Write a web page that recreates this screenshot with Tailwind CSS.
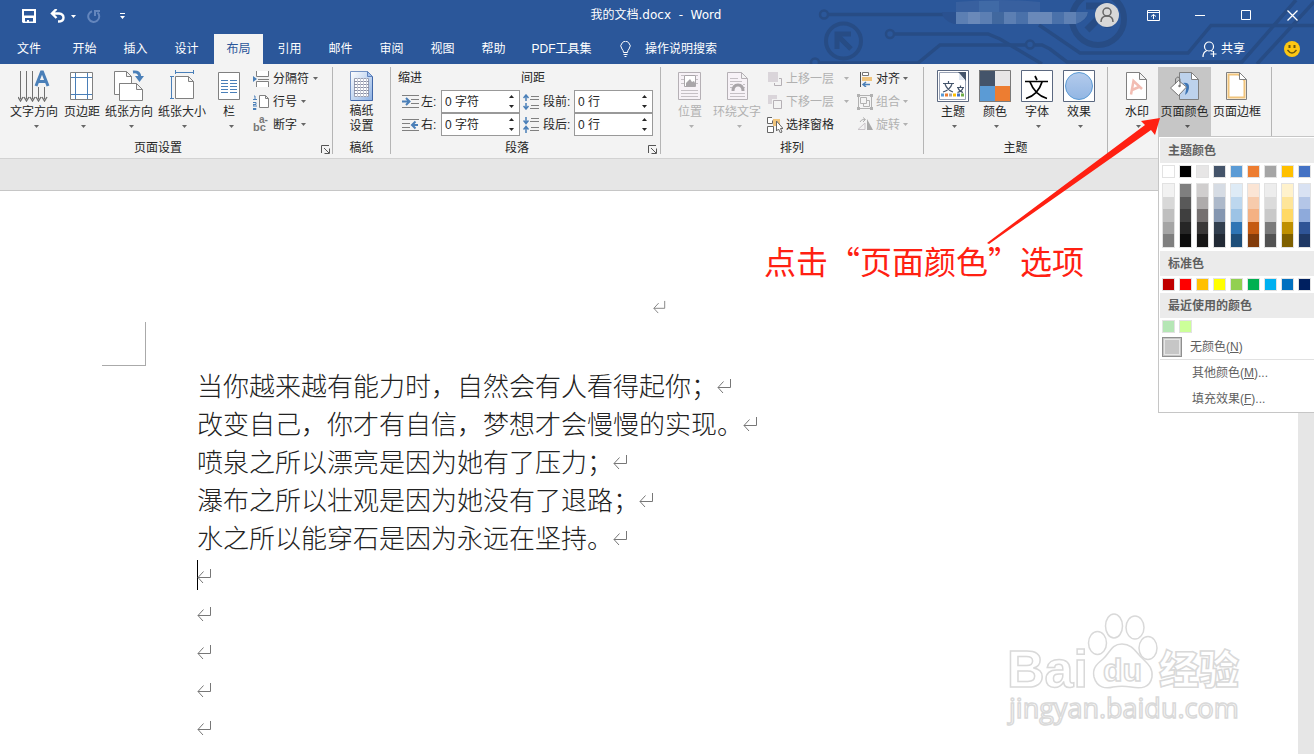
<!DOCTYPE html>
<html lang="zh-CN">
<head>
    <meta charset="UTF-8">
    <meta name="viewport" content="width=device-width, initial-scale=1.0">
    <title>我的文档.docx - Word</title>
    <!-- Tailwind CSS CDN -->
    <script src="https://cdn.jsdelivr.net/npm/@tailwindcss/browser@4"></script>
    <style>
        body {
            font-family: 'Liberation Sans', 'Noto Sans CJK SC', sans-serif;
        }
        .cjk {
            font-family: 'Noto Sans CJK SC', sans-serif;
        }
        .caption {
            font-family: 'DejaVu Sans', 'Noto Sans CJK SC', sans-serif;
        }
    </style>
</head>
<body class="h-screen flex flex-col overflow-hidden bg-[#e6e6e6] text-xs text-[#262626] select-none">

    <!-- Shared symbols -->
    <svg class="hidden">
        <symbol id="caret" viewBox="0 0 5 3"><path d="M0 0h5L2.500 3z" fill="currentColor"/></symbol>
        <symbol id="enter" viewBox="0 0 15 16"><path d="M13.500 1v8.500H1M6.500 3.500l-5.500 6 5 5.500" fill="none" stroke="#777" stroke-width="1"/></symbol>
        <symbol id="launcher" viewBox="0 0 9 9"><path d="M.5 8V.5H8M3 3l5 5M8.500 3.500v5h-5" fill="none" stroke="#555"/></symbol>
    </svg>

    <!-- Title bar and tabs -->
    <header class="relative h-16 shrink-0 bg-[#2b579a] text-white overflow-hidden">
        <svg class="absolute right-0 top-0" width="534" height="64" viewBox="780 0 534 64" fill="none" stroke="#274c85" stroke-width="3.500">
            <circle cx="824" cy="14.500" r="4" stroke-width="2.500"/>
            <path d="M829 14.500h120"/>
            <circle cx="843.500" cy="41" r="17.500" stroke-width="4"/>
            <path d="M837 49V34h14M837 35l14 14" stroke-width="5"/>
            <circle cx="890" cy="34" r="4" stroke-width="2.500"/>
            <path d="M895 34h93l12 5 42 25"/>
            <circle cx="815" cy="62.500" r="4" stroke-width="2.500"/>
            <path d="M820 63h98l22-18h85M1035 45h7l8 4 17 13h175l54-62"/>
            <circle cx="1030" cy="44.500" r="4" stroke-width="2.500"/>
            <path d="M1039 25l41 28h108l23-27.500h103M1257 64l57-62"/>
            <circle cx="1098" cy="19" r="26" stroke-width="6"/>
            <path d="M1087 30l20-20M1086 6h22v22" stroke-width="7"/>
            <g stroke="none">
                <path d="M956 2q44-4 84 0v10h-84z" fill="#38609f"/>
                <path d="M979 1h20v11h-20z" fill="#406aa6"/>
                <path d="M942 12h146q0 8-12 12H954q-12-4-12-12z" fill="#2a5190"/>
                <path d="M956 12h132q-1 8-12 12H956z" fill="#4a71aa"/>
                <path d="M956 12h12v12h-12zM980 12h12v12h-12zM1004 12h12v12h-12z" fill="#5c7fb3"/>
                <path d="M968 12h12v12h-12zM1028 12h24v12h-24z" fill="#6a89b9"/>
                <path d="M992 12h12v12h-12z" fill="#41689f"/>
                <path d="M1064 12h12v12h-12z" fill="#5f81b4"/>
            </g>
        </svg>
        <div class="relative h-[34px] flex items-start">
            <div class="flex items-center h-8 pl-[22px] flex-1">
                <button aria-label="保存"><svg width="14" height="14" viewBox="0 0 14 14"><path fill="#fff" fill-rule="evenodd" d="M0 0h14v14H1l-1-1zM2 2v4.500h10V2zM3 9v3.500h2V11h2v1.500h4V9z"/></svg></button>
                <button class="ml-[14px]" aria-label="撤消"><svg width="15" height="14" viewBox="0 0 15 14" fill="none" stroke="#fff" stroke-width="2.400"><path d="M6.500 0L2 4.500 6.500 9M2 4.500h7q4.500.5 4.500 4.200T8 12.500"/></svg></button>
                <button class="ml-[6px]" aria-label="撤消列表"><svg width="5" height="3"><use href="#caret"/></svg></button>
                <button class="ml-[11px]" aria-label="恢复"><svg width="14" height="14" viewBox="0 0 14 14" fill="none" stroke="#6486bd" stroke-width="2"><path d="M5 2.200a5.500 5.500 0 1 0 5.500 1.200M8 7V2h5"/></svg></button>
                <button class="ml-[19px]" aria-label="自定义快速访问工具栏"><svg width="5" height="7" viewBox="0 0 5 7" fill="#fff"><path d="M0 0h5v1H0zM0 3h5L2.500 6z"/></svg></button>
            </div>
            <h1 class="h-8 leading-[30px] whitespace-pre caption">我的文档.docx  -  Word</h1>
            <div class="flex items-center h-[30px] flex-1 justify-end pl-2 pr-4">
                <button class="mr-7" aria-label="帐户"><svg width="24" height="24" viewBox="0 0 24 24"><circle cx="12" cy="12" r="12" fill="#d8d8d8"/><g fill="none" stroke="#666" stroke-width="1.500"><circle cx="12" cy="9" r="4"/><path d="M6 19q0-6 6-6t6 6"/></g></svg></button>
                <button class="mr-[35px]" aria-label="功能区显示选项"><svg width="13" height="11" viewBox="0 0 13 11" fill="none" stroke="#fff"><path d="M.5.5h12v10H.5zM0 2.500h13M6.500 9V4.500M4 6.500l2.500-2 2.500 2"/></svg></button>
                <button class="mr-[36px]" aria-label="最小化"><svg width="10" height="10" viewBox="0 0 10 10"><path d="M0 5.500h10" stroke="#fff"/></svg></button>
                <button class="mr-[36px]" aria-label="最大化"><svg width="10" height="10" viewBox="0 0 10 10"><path d="M.5.5h9v9h-9z" fill="none" stroke="#fff"/></svg></button>
                <button aria-label="关闭"><svg width="11" height="11" viewBox="0 0 11 11"><path d="M.5.5l10 10M10.500.5l-10 10" stroke="#fff" stroke-width="1.300"/></svg></button>
            </div>
        </div>
        <nav class="relative h-[30px] flex items-center leading-[28px] whitespace-nowrap">
            <button class="w-[58px] h-full">文件</button>
            <button class="w-[51px] h-full ml-px">开始</button>
            <button class="w-[51px] h-full">插入</button>
            <button class="w-[51px] h-full">设计</button>
            <button class="w-[49px] h-full ml-[2px] mr-px bg-[#f3f3f3] text-[#2b579a]">布局</button>
            <button class="w-[51px] h-full">引用</button>
            <button class="w-[51px] h-full">邮件</button>
            <button class="w-[51px] h-full">审阅</button>
            <button class="w-[51px] h-full">视图</button>
            <button class="w-[51px] h-full">帮助</button>
            <button class="w-[85px] h-full">PDF工具集</button>
            <button class="h-full flex items-center gap-[14px] ml-4">
                <svg width="11" height="16" viewBox="0 0 11 16" fill="none" stroke="#fff"><path d="M3.500 11.500Q3.500 9.500 2 8A4.600 4.600 0 1 1 9 8Q7.500 9.500 7.500 11.500zM3.500 13.500h4M4.500 15.500h2"/></svg>
                操作说明搜索
            </button>
            <button class="h-full flex items-center gap-1 ml-auto">
                <svg width="15" height="17" viewBox="0 0 15 17" fill="none" stroke="#fff" stroke-width="1.200"><circle cx="7" cy="5.500" r="4.500"/><path d="M1 16q0-5 4-6.500M9 9.500l1.500 1M11.500 10v6M8.500 13h6"/></svg>
                共享
            </button>
            <button class="ml-[39px] mr-[14px]" aria-label="反馈"><svg width="16" height="16" viewBox="0 0 16 16"><circle cx="8" cy="8" r="8" fill="#fdc712"/><path d="M5.500 4v3M10.500 4v3" stroke="#6b560d" stroke-width="2"/><path d="M3.500 9q4.500 6 9 0" fill="none" stroke="#6b560d" stroke-width="1.300"/></svg></button>
        </nav>
    </header>

    <!-- Ribbon -->
    <section class="h-[95px] shrink-0 flex bg-[#f3f3f3] border-b border-[#d2d2d2] pt-[3px] pb-1 whitespace-nowrap">

        <!-- 页面设置 -->
        <div class="relative w-[333px] shrink-0 border-r border-[#b5b5b5] flex flex-col justify-between">
            <div class="flex pl-[7px]">
                <button class="w-[54px] pt-[3px] flex flex-col items-center">
                    <svg width="32" height="32" viewBox="0 0 32 32" fill="none"><path d="M2.500 1v28M8.500 1v28M14.500 1v28M20.500 17v12M26.500 17v12" stroke="#707070"/><path d="M0 27l2.500 4L5 27M6 27l2.500 4 2.500-4M12 27l2.500 4 2.500-4M18 27l2.500 4 2.500-4M24 27l2.500 4 2.500-4" stroke="#707070" stroke-width="1.400"/><path d="M18 16l5.500-14h1L30 16M20 11.500h8" stroke="#4a7fb8" stroke-width="3"/></svg>
                    <span class="h-5 leading-5">文字方向</span>
                    <svg class="mt-[3px] ml-[5px] text-[#666]" width="5" height="3"><use href="#caret"/></svg>
                </button>
                <button class="w-[42px] pt-[3px] flex flex-col items-center">
                    <svg width="32" height="32" viewBox="0 0 32 32" fill="none"><path d="M4.500 2.500h22v27h-22z" fill="#fff" stroke="#808080"/><path d="M9.500 3v26M21.500 3v26M5 7.500h21M5 24.500h21" stroke="#4a7fb8"/></svg>
                    <span class="h-5 leading-5">页边距</span>
                    <svg class="mt-[3px] ml-[3px] text-[#666]" width="5" height="3"><use href="#caret"/></svg>
                </button>
                <button class="w-[52px] pt-[3px] flex flex-col items-center">
                    <svg width="32" height="32" viewBox="0 0 32 32" fill="none"><path d="M1.500 24.500v-23h12l5 5V13.500h-12v11zM13.500 1.500v5h5" fill="#fff" stroke="#808080"/><path d="M6.500 13.500h17l6 6v11h-23zM23.500 13.500v6h6" fill="#fff" stroke="#808080"/><path d="M20 2q7-1 7 6" stroke="#4a7fb8" stroke-width="3"/><path d="M22 6l4.500 6L31 6z" fill="#4a7fb8"/></svg>
                    <span class="h-5 leading-5">纸张方向</span>
                    <svg class="mt-[3px] ml-[5px] text-[#666]" width="5" height="3"><use href="#caret"/></svg>
                </button>
                <button class="w-[54px] pt-[3px] flex flex-col items-center">
                    <svg width="32" height="32" viewBox="0 0 32 32" fill="none"><path d="M9.500 6.500h13l5 5v17h-18zM22.500 6.500v5h5" fill="#fff" stroke="#808080"/><path d="M9.500 0v4M27.500 0v4M10 2.500h17M4 6.500h4M4 28.500h4M5.500 7v21" stroke="#4a7fb8"/></svg>
                    <span class="h-5 leading-5">纸张大小</span>
                    <svg class="mt-[3px] ml-[5px] text-[#666]" width="5" height="3"><use href="#caret"/></svg>
                </button>
                <button class="w-[40px] pt-[3px] flex flex-col items-center">
                    <svg width="32" height="32" viewBox="0 0 32 32" fill="none"><path d="M5.500 2.500h21v27h-21z" fill="#fff" stroke="#808080"/><path d="M8 10.500h7M8 13.500h7M8 16.500h7M8 19.500h7M8 22.500h7M17 10.500h7M17 13.500h7M17 16.500h7M17 19.500h7M17 22.500h7" stroke="#4a7fb8"/></svg>
                    <span class="h-5 leading-5">栏</span>
                    <svg class="mt-[3px] ml-[5px] text-[#666]" width="5" height="3"><use href="#caret"/></svg>
                </button>
                <div class="flex flex-col items-start ml-1">
                    <button class="h-[23px] flex items-center gap-1">
                        <svg width="16" height="16" viewBox="0 0 16 16" fill="none"><path d="M3.500 0v5.500h12V0M3.500 16v-5.500h12V16" fill="#fff" stroke="#808080"/><path d="M5 8.500h11" stroke="#808080"/><path d="M0 5v6l4-3z" fill="#4a7fb8"/></svg>
                        分隔符
                        <svg class="text-[#666]" width="5" height="3"><use href="#caret"/></svg>
                    </button>
                    <button class="h-[23px] flex items-center gap-1">
                        <svg width="16" height="16" viewBox="0 0 16 16" fill="none"><path d="M6.500 1.500h6l3 3v9h-9zM12.500 1.500v3h3" fill="#fff" stroke="#808080"/><path d="M1 2h1v3M0 5.500h4M0 8.500h3v2H0v1.500h4M0 14.500h3v1H0" stroke="#4a7fb8"/></svg>
                        行号
                        <svg class="text-[#666]" width="5" height="3"><use href="#caret"/></svg>
                    </button>
                    <button class="h-[23px] flex items-center gap-1">
                        <svg width="16" height="16" viewBox="0 0 16 16" class="overflow-visible" fill="#777" font-family="Liberation Sans" font-weight="bold"><text x="0" y="14" font-size="11">bc<tspan x="6" y="6" font-size="10">a-</tspan></text></svg>
                        断字
                        <svg class="text-[#666]" width="5" height="3"><use href="#caret"/></svg>
                    </button>
                </div>
            </div>
            <span class="leading-3 text-center pr-4">页面设置</span>
            <button class="absolute right-[2px] bottom-0" aria-label="页面设置对话框"><svg width="9" height="9"><use href="#launcher"/></svg></button>
        </div>

        <!-- 稿纸 -->
        <div class="w-[58px] shrink-0 border-r border-[#b5b5b5] flex flex-col items-center justify-between">
            <button class="pt-[3px] flex flex-col items-center">
                <svg width="32" height="32" viewBox="0 0 32 32" fill="none">
                    <defs><linearGradient id="sheet" x2="1" y2="1"><stop offset="0" stop-color="#fff"/><stop offset="1" stop-color="#8db1e3"/></linearGradient></defs>
                    <path d="M4.500 1.500h17l5 5v24h-22z" fill="url(#sheet)" stroke="#7593c4"/><path d="M26.500 7v23.500H5" stroke="#3f66a8"/><path d="M21.500 1.500v5h5z" fill="#a9c4ec" stroke="#5f83bd"/>
                    <path d="M8.500 8.500h14v18h-14z" fill="#fff" stroke="#9aa0b3"/><path d="M8 11.500h15M8 14.500h15M8 17.500h15M8 20.500h15M8 23.500h15" stroke="#8a8fa3"/><path d="M11.500 8v19M14.500 8v19M17.500 8v19M20.500 8v19" stroke="#c3c7d4"/>
                </svg>
                <span class="mt-[2px] leading-[15px]">稿纸<br>设置</span>
            </button>
            <span class="leading-3">稿纸</span>
        </div>

        <!-- 段落 -->
        <div class="relative w-[270px] shrink-0 border-r border-[#b5b5b5] flex flex-col justify-between pl-[7px]">
            <div class="flex gap-px">
                <div class="w-[122px]">
                    <div class="h-[23px] leading-[23px]">缩进</div>
                    <div class="h-[23px] flex items-center">
                        <svg class="ml-1" width="17" height="14" viewBox="0 0 17 14" fill="none"><path d="M0 .5h17M9 4.500h8M9 8.500h8M0 12.500h17" stroke="#808080"/><path d="M0 6.500h6M4 3l3.500 3.500L4 10" stroke="#4a7fb8" stroke-width="2"/></svg>
                        <label for="indentLeft" class="ml-[2px] flex-1">左:</label>
                        <div class="w-[79px] h-[23px] flex border border-[#999] bg-white">
                            <input id="indentLeft" type="text" value="0 字符" class="w-0 flex-1 pl-[3px] outline-none">
                            <div class="w-4 flex flex-col items-center justify-center gap-[7px]">
                                <button aria-label="增加"><svg class="rotate-180 block" width="5" height="3"><use href="#caret"/></svg></button>
                                <button aria-label="减少"><svg class="block" width="5" height="3"><use href="#caret"/></svg></button>
                            </div>
                        </div>
                    </div>
                    <div class="h-[23px] flex items-center">
                        <svg class="ml-1" width="17" height="14" viewBox="0 0 17 14" fill="none"><path d="M0 1.500h17M0 5.500h8M0 9.500h8M0 12.500h17" stroke="#808080"/><path d="M16 7h-5M13.500 3.500L10 7l3.500 3.500" stroke="#4a7fb8" stroke-width="2"/></svg>
                        <label for="indentRight" class="ml-[2px] flex-1">右:</label>
                        <div class="w-[79px] h-[23px] flex border border-[#999] bg-white">
                            <input id="indentRight" type="text" value="0 字符" class="w-0 flex-1 pl-[3px] outline-none">
                            <div class="w-4 flex flex-col items-center justify-center gap-[7px]">
                                <button aria-label="增加"><svg class="rotate-180 block" width="5" height="3"><use href="#caret"/></svg></button>
                                <button aria-label="减少"><svg class="block" width="5" height="3"><use href="#caret"/></svg></button>
                            </div>
                        </div>
                    </div>
                </div>
                <div class="w-[132px]">
                    <div class="h-[23px] leading-[23px]">间距</div>
                    <div class="h-[23px] flex items-center">
                        <svg class="ml-[2px]" width="16" height="16" viewBox="0 0 16 16" fill="none"><path d="M8 2.500h8M7 5.500h9M8 11.500h8M7 14.500h9" stroke="#808080"/><path d="M3 7V1M.5 4L3 1l2.500 3M3 9v6M.5 12L3 15l2.500-3" stroke="#4a7fb8" stroke-width="1.500"/></svg>
                        <label for="spaceBefore" class="ml-1 flex-1">段前:</label>
                        <div class="w-[79px] h-[23px] flex border border-[#999] bg-white">
                            <input id="spaceBefore" type="text" value="0 行" class="w-0 flex-1 pl-[3px] outline-none">
                            <div class="w-4 flex flex-col items-center justify-center gap-[7px]">
                                <button aria-label="增加"><svg class="rotate-180 block" width="5" height="3"><use href="#caret"/></svg></button>
                                <button aria-label="减少"><svg class="block" width="5" height="3"><use href="#caret"/></svg></button>
                            </div>
                        </div>
                    </div>
                    <div class="h-[23px] flex items-center">
                        <svg class="ml-[2px]" width="16" height="16" viewBox="0 0 16 16" fill="none"><path d="M8 1.500h8M7 4.500h9M8 10.500h8M7 13.500h9" stroke="#808080"/><path d="M3 0v6M.5 3.500L3 6.500l2.500-3M3 16V10M.5 12.500L3 9.500l2.500 3" stroke="#4a7fb8" stroke-width="1.500"/></svg>
                        <label for="spaceAfter" class="ml-1 flex-1">段后:</label>
                        <div class="w-[79px] h-[23px] flex border border-[#999] bg-white">
                            <input id="spaceAfter" type="text" value="0 行" class="w-0 flex-1 pl-[3px] outline-none">
                            <div class="w-4 flex flex-col items-center justify-center gap-[7px]">
                                <button aria-label="增加"><svg class="rotate-180 block" width="5" height="3"><use href="#caret"/></svg></button>
                                <button aria-label="减少"><svg class="block" width="5" height="3"><use href="#caret"/></svg></button>
                            </div>
                        </div>
                    </div>
                </div>
            </div>
            <span class="leading-3 text-center pr-6">段落</span>
            <button class="absolute right-[3px] bottom-0" aria-label="段落对话框"><svg width="9" height="9"><use href="#launcher"/></svg></button>
        </div>

        <!-- 排列 -->
        <div class="w-[263px] shrink-0 border-r border-[#b5b5b5] flex flex-col justify-between">
            <div class="flex pl-[7px]">
                <button disabled class="w-[44px] pt-[3px] flex flex-col items-center text-[#b1b1b1]">
                    <svg width="32" height="32" viewBox="0 0 32 32" fill="none"><path d="M4.500 2.500h22v27h-22z" fill="#f7f2f7" stroke="#b5b0b5"/><path d="M7 5.500h3M22 5.500h2M7 9.500h3M22 9.500h2M7 13.500h3M22 13.500h2M7 20.500h17M7 23.500h17M7 26.500h17" stroke="#c5c0c5"/><path d="M10.500 5.500h11v11h-11z" stroke="#aaa6aa" fill="#fff"/><path d="M12 16v-3l4-4 2 3 2-1 1 2v3z" fill="#a9a5a9"/></svg>
                    <span class="h-5 leading-5">位置</span>
                    <svg class="mt-[3px] ml-[3px]" width="5" height="3"><use href="#caret"/></svg>
                </button>
                <button disabled class="w-[50px] pt-[3px] flex flex-col items-center text-[#b1b1b1]">
                    <svg width="32" height="32" viewBox="0 0 32 32" fill="none"><path d="M6.500 2.500h14l6 6v21h-20zM20.500 2.500v6h6" fill="#f7f2f7" stroke="#b5b0b5"/><path d="M9 8.500h8M9 11.500h12M9 14.500h3M22 14.500h2M9 17.500h2M23 17.500h1M9 23.500h15M9 26.500h15" stroke="#c5c0c5"/><path d="M12 21q0-6 5-6t5 6" stroke="#a9a5a9" stroke-width="3"/></svg>
                    <span class="h-5 leading-5">环绕文字</span>
                    <svg class="mt-[3px] ml-[5px]" width="5" height="3"><use href="#caret"/></svg>
                </button>
                <div class="w-[82px] flex flex-col ml-[5px]">
                    <button disabled class="h-[23px] flex items-center gap-[3px] text-[#b1b1b1]">
                        <svg width="16" height="16" viewBox="0 0 16 16" fill="none"><path d="M1 1h10v10H1z" fill="#dad5da"/><path d="M12 7.500h2.500v7h-7V12" stroke="#b5b0b5"/></svg>
                        上移一层
                        <svg class="ml-auto" width="5" height="3"><use href="#caret"/></svg>
                    </button>
                    <button disabled class="h-[23px] flex items-center gap-[3px] text-[#b1b1b1]">
                        <svg width="16" height="16" viewBox="0 0 16 16" fill="none"><path d="M1 1h9v4H5v5H1z" fill="#dad5da"/><path d="M6.500 6.500h8v8h-8z" stroke="#b5b0b5"/></svg>
                        下移一层
                        <svg class="ml-auto" width="5" height="3"><use href="#caret"/></svg>
                    </button>
                    <button class="h-[23px] flex items-center gap-[3px]">
                        <svg width="16" height="16" viewBox="0 0 16 16" fill="none"><path d="M6 2h7v7H6z" fill="#f0c47c"/><path d="M5 .5H.5v6h5v-3M.5 9.500h6v6h-6z" stroke="#666" fill="#fff"/><path d="M9.500 4v10l2-2 2 4 1.500-1-1.500-3.500h2.500z" fill="#fff" stroke="#666"/></svg>
                        选择窗格
                    </button>
                </div>
                <div class="flex flex-col items-start ml-[8px]">
                    <button class="h-[23px] flex items-center gap-[3px]">
                        <svg width="16" height="16" viewBox="0 0 16 16" fill="none"><path d="M3.500 1v15" stroke="#555"/><path d="M5.500 1.500h6v3h-6z" stroke="#777" fill="#fff"/><path d="M5 6h10v4H5z" fill="#f0c47c"/><path d="M6 13.500h7M9 11l-3 2.500L9 16" stroke="#4a7fb8" stroke-width="1.500"/></svg>
                        对齐
                        <svg class="text-[#666]" width="5" height="3"><use href="#caret"/></svg>
                    </button>
                    <button disabled class="h-[23px] flex items-center gap-[3px] text-[#b1b1b1]">
                        <svg width="16" height="16" viewBox="0 0 16 16" fill="none" stroke="#b1b1b1"><path d="M1.500 3v10M14.500 3v10M3 1.500h10M3 14.500h10"/><path d="M6.500 6.500h6v6h-6z"/><path d="M3.500 3.500h6v6h-6z" fill="#f3f3f3"/><path d="M0 0h3v3H0zM13 0h3v3h-3zM0 13h3v3H0zM13 13h3v3h-3z" fill="#b1b1b1" stroke="none"/></svg>
                        组合
                        <svg width="5" height="3"><use href="#caret"/></svg>
                    </button>
                    <button disabled class="h-[23px] flex items-center gap-[3px] text-[#b1b1b1]">
                        <svg width="16" height="16" viewBox="0 0 16 16" fill="none"><path d="M1 12.500h7V6z" stroke="#c9c4c9"/><path d="M10 2v11h6z" fill="#a9a9a9"/><path d="M3 5q1-3 5-2.500M6 .5l2.500 2L6 5" stroke="#b1b1b1"/></svg>
                        旋转
                        <svg width="5" height="3"><use href="#caret"/></svg>
                    </button>
                </div>
            </div>
            <span class="leading-3 text-center">排列</span>
        </div>

        <!-- 主题 -->
        <div class="w-[184px] shrink-0 border-r border-[#b5b5b5] flex flex-col justify-between">
            <div class="flex pl-2">
                <button class="w-[42px] pt-[3px] flex flex-col items-center">
                    <svg width="32" height="32" viewBox="0 0 32 32" fill="none"><path d="M.5.500h31v31H.5z" fill="#fff" stroke="#5b6880"/><path d="M2.500 2.500h20l6 6v21h-26z" stroke="#9aa3b5"/><path d="M21 2h8v9z" fill="#44546a"/><path d="M22 3v7h6z" fill="#dfe6f0"/><path d="M6 13.500h11M11.500 11v2M8 14q2 6 8 8M15 14q-2 6-9 8M20 17.500h7M23.500 15.500v2M21 18q1 3 5 4.500M26 18q-1 3-5.500 4.500" stroke="#44546a" stroke-width="1.200"/><path d="M4 23.500h3v3H4z" fill="#5b9bd5"/><path d="M8 23.500h3v3H8z" fill="#ed7d31"/><path d="M12 23.500h3v3h-3z" fill="#a5a5a5"/><path d="M16 23.500h3v3h-3z" fill="#ffc000"/><path d="M20 23.500h3v3h-3z" fill="#4472c4"/><path d="M24 23.500h3v3h-3z" fill="#70ad47"/></svg>
                    <span class="h-5 leading-5">主题</span>
                    <svg class="mt-[3px] ml-[3px] text-[#666]" width="5" height="3"><use href="#caret"/></svg>
                </button>
                <button class="w-[42px] pt-[3px] flex flex-col items-center">
                    <svg width="32" height="32" viewBox="0 0 32 32"><path d="M0 0h16v16H0z" fill="#44546a"/><path d="M16 0h16v16H16z" fill="#e7e6e6"/><path d="M0 16h16v16H0z" fill="#5b9bd5"/><path d="M16 16h16v16H16z" fill="#ed7d31"/><path d="M.5.500h31v31H.5z" fill="none" stroke="#7a7a7a"/></svg>
                    <span class="h-5 leading-5">颜色</span>
                    <svg class="mt-[3px] ml-[3px] text-[#666]" width="5" height="3"><use href="#caret"/></svg>
                </button>
                <button class="w-[42px] pt-[3px] flex flex-col items-center">
                    <svg width="32" height="32" viewBox="0 0 32 32" fill="none"><path d="M.5.500h31v31H.5z" fill="#fff" stroke="#5b6880"/><path d="M4 11.500h23M14 6l2 4M9 12q5 13 17 16.500M21 12Q17 25 5 28.500" stroke="#000" stroke-width="1.700"/></svg>
                    <span class="h-5 leading-5">字体</span>
                    <svg class="mt-[3px] ml-[3px] text-[#666]" width="5" height="3"><use href="#caret"/></svg>
                </button>
                <button class="w-[42px] pt-[3px] flex flex-col items-center">
                    <svg width="32" height="32" viewBox="0 0 32 32">
                        <defs><linearGradient id="ball" x2="0" y2="1"><stop offset="0" stop-color="#b4cbec"/><stop offset="1" stop-color="#92b6e3"/></linearGradient></defs>
                        <path d="M.5.500h31v31H.5z" fill="#fff" stroke="#5b6880"/><circle cx="16" cy="16" r="13.500" fill="url(#ball)" stroke="#5b9bd5"/>
                    </svg>
                    <span class="h-5 leading-5">效果</span>
                    <svg class="mt-[3px] ml-[3px] text-[#666]" width="5" height="3"><use href="#caret"/></svg>
                </button>
            </div>
            <span class="leading-3 text-center">主题</span>
        </div>

        <!-- 页面背景 -->
        <div class="w-[164px] shrink-0 border-r border-[#b5b5b5] flex items-start pl-2">
            <button class="w-[42px] h-[69px] pt-[3px] flex flex-col items-center">
                <svg width="32" height="32" viewBox="0 0 32 32" fill="none"><path d="M5.500 2.500h13l7 7v20h-20zM18.500 2.500v7h7" fill="#fff" stroke="#808080"/><path d="M10 24.500L12.500 11l8.500 8M11 20l7-3" stroke="#f2bdb3" stroke-width="2.500"/></svg>
                <span class="h-5 leading-5">水印</span>
                <svg class="mt-[3px] ml-[3px] text-[#666]" width="5" height="3"><use href="#caret"/></svg>
            </button>
            <div class="relative">
                <button class="w-[53px] h-[69px] pt-[3px] flex flex-col items-center bg-[#c6c6c6]">
                    <svg width="32" height="32" viewBox="0 0 32 32" fill="none"><path d="M10.500 2.500h12l7 7v20h-19z" fill="#bdd2ec" stroke="#808080"/><path d="M22.500 2.500v7h7z" fill="#fff" stroke="#808080"/><path d="M14 13q5 1 2 12 4-3 4-8t-6-4z" fill="#3f76b5"/><path d="M1.500 18L9.500 10.500l8 6.500-8 8.500z" fill="#fff" stroke="#777"/><path d="M6.500 14V9q2.500-4 4.500 0v7" stroke="#777"/><circle cx="10.500" cy="16" r="1.200" fill="#777"/></svg>
                    <span class="h-5 leading-5">页面颜色</span>
                    <svg class="mt-[3px] ml-[5px] text-[#555]" width="5" height="3"><use href="#caret"/></svg>
                </button>

                <!-- Page color menu -->
                <div class="absolute z-10 left-0 top-full w-[156px] bg-white border border-r-0 border-[#c6c6c6] pl-px pt-px text-[#5f5f5f]">
                    <div class="h-[25px] leading-[27px] pl-2 bg-[#ebebeb] font-bold">主题颜色</div>
                    <div id="themeRow" class="flex gap-1 pl-[2px] pt-[2px]"></div>
                    <div id="shadeCols" class="flex gap-1 pl-[2px] pt-[5px] pb-[3px]"></div>
                    <div class="h-[25px] leading-[27px] pl-2 bg-[#ebebeb] font-bold">标准色</div>
                    <div id="standardRow" class="flex gap-1 pl-[2px] py-[2px]"></div>
                    <div class="h-[25px] leading-[27px] pl-2 bg-[#ebebeb] font-bold">最近使用的颜色</div>
                    <div id="recentRow" class="flex gap-1 pl-[2px] py-[2px]"></div>
                    <button class="w-full h-6 flex items-center gap-2 pl-[2px]">
                        <span class="w-5 h-5 border border-[#8f8f8f] bg-[#c6c6c6] p-px"><span class="block w-full h-full border border-[#e6e6e6]"></span></span>
                        <span>无颜色(<u>N</u>)</span>
                    </button>
                    <div class="border-b border-[#e1e1e1]"></div>
                    <button class="w-full h-[26px] leading-[27px] block text-left pl-8">其他颜色(<u>M</u>)...</button>
                    <button class="w-full h-[26px] leading-[27px] block text-left pl-8">填充效果(<u>F</u>)...</button>
                </div>
            </div>
            <button class="w-[52px] h-[69px] pt-[3px] flex flex-col items-center">
                <svg width="32" height="32" viewBox="0 0 32 32" fill="none"><path d="M5.500 2.500h13l7 7v20h-20z" fill="#fff" stroke="#808080"/><path d="M7.500 27.500v-23h10l6 6v17z" stroke="#f0c47c" stroke-width="2"/><path d="M18.500 2.500v7h7z" fill="#fff" stroke="#808080"/></svg>
                <span class="h-5 leading-5">页面边框</span>
            </button>
        </div>
    </section>

    <!-- Document -->
    <main class="flex-1 pt-[31px] pr-4 flex min-h-0">
        <div class="flex-1 bg-white border-t border-[#c6c6c6] pt-[106px] pl-[197px] pr-[177px] whitespace-nowrap overflow-hidden">
            <div class="h-5 flex items-center justify-center"><svg width="13" height="14"><use href="#enter"/></svg></div>
            <div class="w-11 h-11 mt-[5px] -ml-[95px] border-r border-b border-[#aaa]"></div>
            <div id="docText" class="text-[26px] leading-[38px] text-[#222] font-light cjk"></div>
        </div>
    </main>

    <!-- Callout -->
    <p class="absolute left-[764px] top-[236px] text-[32px] leading-[48px] text-[#ff2012] whitespace-nowrap cjk">点击“页面颜色”选项</p>
    <svg class="absolute z-20 left-[980px] top-[110px] pointer-events-none" width="190" height="140" viewBox="980 110 190 140"><path d="M987 243L1145 125l-4-4 19-3-5 17-4-5L989 244z" fill="#ff2012"/></svg>

    <!-- Watermark -->
    <svg class="absolute left-[1000px] top-[606px] pointer-events-none" width="250" height="125" viewBox="1000 606 250 125" fill="#fff" stroke="#d9d9d9" stroke-width="1.500">
        <text x="1007" y="687" font-family="Liberation Sans" font-weight="bold" font-size="52">Bai</text>
        <ellipse cx="1097.500" cy="643" rx="9" ry="11.500"/>
        <ellipse cx="1114" cy="626" rx="8.500" ry="12"/>
        <ellipse cx="1135" cy="627.500" rx="9" ry="11.500"/>
        <ellipse cx="1148" cy="648" rx="9" ry="11.500"/>
        <path d="M1122 644c-11 0-12 9-19 15-6 5-11 9-9 18 3 11 12 12 19 10 6-1 12-1 18 0 10 2 19 1 21-10 1-9-4-13-9-18-7-6-10-15-21-15z"/>
        <text x="1103" y="681" font-family="Liberation Sans" font-size="32" font-weight="bold">du</text>
        <text x="1159" y="684" font-family="Noto Sans CJK SC" font-weight="900" font-size="40">经验</text>
        <text x="1009" y="718" font-family="Open Sans" font-size="27">jingyan.baidu.com</text>
    </svg>

    <script>
        const themeColors = ['#ffffff', '#000000', '#e7e6e6', '#44546a', '#5b9bd5', '#ed7d31', '#a5a5a5', '#ffc000', '#4472c4'];
        const shades = [
            ['#f2f2f2', '#d8d8d8', '#bfbfbf', '#a5a5a5', '#7f7f7f'],
            ['#7f7f7f', '#595959', '#3f3f3f', '#262626', '#0c0c0c'],
            ['#d0cece', '#aeabab', '#757070', '#3a3838', '#171616'],
            ['#d6dce4', '#adb9ca', '#8496b0', '#323f4f', '#222a35'],
            ['#deebf6', '#bdd7ee', '#9cc3e5', '#2e75b5', '#1e4e79'],
            ['#fbe5d5', '#f7cbac', '#f4b183', '#c55a11', '#833c0b'],
            ['#ededed', '#dbdbdb', '#c9c9c9', '#7b7b7b', '#525252'],
            ['#fff2cc', '#fee599', '#ffd965', '#bf9000', '#7f6000'],
            ['#d9e2f3', '#b4c6e7', '#8eaadb', '#2f5496', '#1f3864']
        ];
        const standardColors = ['#c00000', '#ff0000', '#ffc000', '#ffff00', '#92d050', '#00b050', '#00b0f0', '#0070c0', '#002060'];
        const recentColors = ['#b5e6b5', '#ccff99'];

        const swatch = (color) => `<button class="w-[13px] h-[13px] border border-[#e2e2e2]" aria-label="${color}" style="background:${color}"></button>`;
        const fillRow = (id, colors) => {
            document.getElementById(id).innerHTML = colors.map(swatch).join('');
        };
        fillRow('themeRow', themeColors);
        fillRow('standardRow', standardColors);
        fillRow('recentRow', recentColors);

        document.getElementById('shadeCols').innerHTML = shades.map(column => `
            <div class="w-[13px] h-[65px] border border-[#e2e2e2] flex flex-col">
                ${column.map(color => `<button class="flex-1" aria-label="${color}" style="background:${color}"></button>`).join('')}
            </div>
        `).join('');

        // Document paragraphs; empty ones only show their mark
        const paragraphs = [
            '当你越来越有能力时，自然会有人看得起你；',
            '改变自己，你才有自信，梦想才会慢慢的实现。',
            '喷泉之所以漂亮是因为她有了压力；',
            '瀑布之所以壮观是因为她没有了退路；',
            '水之所以能穿石是因为永远在坚持。',
            '', '', '', '', ''
        ];
        const mark = '<svg class="mt-[2px]" width="15" height="16"><use href="#enter"/></svg>';
        document.getElementById('docText').innerHTML = paragraphs.map((text, i) =>
            `<p class="h-[38px] flex items-center">${i === 5 ? '<span class="w-px h-[30px] -mr-px bg-black"></span>' : ''}${text}${mark}</p>`
        ).join('');
    </script>
</body>
</html>
